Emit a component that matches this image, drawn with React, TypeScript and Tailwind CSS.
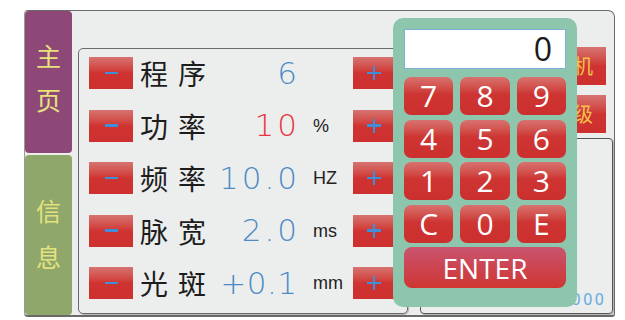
import React from "react";

const rows = [
  { label: "程序", value: "6", unit: "", red: false, track: "tracking-[3px] -mr-[3px]" },
  { label: "功率", value: "10", unit: "%", red: true, track: "tracking-[3px] -mr-[3px]" },
  { label: "频率", value: "10.0", unit: "HZ", red: false, track: "tracking-[3px] -mr-[3px]" },
  { label: "脉宽", value: "2.0", unit: "ms", red: false, track: "tracking-[3px] -mr-[3px]" },
  { label: "光斑", value: "+0.1", unit: "mm", red: false, track: "tracking-[0.5px] -mr-[0.5px]" },
];

const cjk = { fontFamily: '"Noto Sans CJK SC", "Noto Sans", sans-serif' };
const num = { fontFamily: '"DejaVu Sans", "Noto Sans", sans-serif' };
const ui = { fontFamily: '"Open Sans", "Noto Sans", sans-serif' };

function RedBtn({ children, className = "" }: { children?: React.ReactNode; className?: string }) {
  return (
    <div
      className={
        "flex items-center justify-center bg-gradient-to-b from-[#d67371] via-[#cf3331] via-50% to-[#cd302e] " +
        className
      }
    >
      {children}
    </div>
  );
}

function Key({ children, className = "" }: { children: React.ReactNode; className?: string }) {
  return (
    <div
      className={
        "flex items-center justify-center rounded-[7px] bg-gradient-to-b from-[#d77270] via-[#cd3432] via-45% to-[#cc302e] text-white text-[30px] leading-none " +
        className
      }
      style={ui}
    >
      {children}
    </div>
  );
}

export default function App() {
  return (
    <div className="relative w-[625px] h-[320px] bg-white overflow-hidden">
      <div className="pt-[10px] pl-[24px]">
        <div className="flex w-[591px] h-[307px] bg-[#eceeed] border-t border-r border-b-2 border-[#6a6a6a] rounded-tr-[7px] rounded-br-[3px] rounded-l-[4px] border-l border-l-[#9a9a9a]">
          {/* sidebar */}
          <div className="flex flex-col w-[47px] gap-[2px] shrink-0">
            <div
              className="h-[142px] bg-[#8e4878] rounded-[4px] flex flex-col items-center justify-center pb-[10px] text-[#e7e27c] text-[25px] leading-[44px]"
              style={cjk}
            >
              <span>主</span>
              <span>页</span>
            </div>
            <div
              className="flex-1 bg-[#8fa76b] rounded-[4px] flex flex-col items-center justify-center pb-[4px] text-[#e2e27e] text-[25px] leading-[46px]"
              style={cjk}
            >
              <span>信</span>
              <span>息</span>
            </div>
          </div>

          {/* inner panel */}
          <div className="ml-[6px] mt-[37px] w-[330px] h-[266px] border-[1.5px] border-[#6a6a6a] rounded-[5px] pt-[8px] pl-[10px] shadow-[1px_1px_1px_rgba(0,0,0,0.25)]">
            <div className="flex flex-col gap-[20.5px]">
              {rows.map((r) => (
                <div key={r.label} className="flex items-center h-[32px]">
                  <RedBtn className="w-[44px] h-[32px] shrink-0">
                    <span className="block w-[13px] h-[2.5px] bg-[#3d8fd9]" />
                  </RedBtn>
                  <div
                    className="ml-[7px] w-[66px] shrink-0 text-[28px] leading-none tracking-[10px] text-[#1d1d1d] whitespace-nowrap"
                    style={cjk}
                  >
                    {r.label}
                  </div>
                  <div
                    className={
                      "w-[91px] shrink-0 text-right text-[31px] leading-none font-extralight whitespace-nowrap " +
                      (r.red ? "text-[#e8343f]" : "text-[#4d8bc6]")
                    }
                    style={num}
                  >
                    <span className={r.track}>{r.value}</span>
                  </div>
                  <div
                    className="w-[56px] shrink-0 pl-[16px] text-[18px] leading-none text-[#222]"
                    style={{ fontFamily: '"Liberation Sans", Arial, sans-serif' }}
                  >
                    {r.unit}
                  </div>
                  <RedBtn className="w-[44px] h-[32px] shrink-0">
                    <span className="relative block w-[14px] h-[14px] -ml-[2px]">
                      <span className="absolute left-0 top-[5.75px] w-[14px] h-[2.5px] bg-[#3d8fd9]" />
                      <span className="absolute top-0 left-[5.75px] w-[2.5px] h-[14px] bg-[#3d8fd9]" />
                    </span>
                  </RedBtn>
                </div>
              ))}
            </div>
          </div>

          {/* right column */}
          <div className="ml-[12px] flex-1 flex flex-col pt-[36px] pb-[1px] pr-[1px]">
            <RedBtn className="self-end mr-[7px] w-[100px] h-[38px] !justify-end pr-[13px]">
              <span className="text-[20px] leading-none text-[#f2c24a]" style={cjk}>
                待机
              </span>
            </RedBtn>
            <RedBtn className="self-end mr-[7px] mt-[10px] w-[100px] h-[38px] !justify-end pr-[13px]">
              <span className="text-[20px] leading-none text-[#f2c24a]" style={cjk}>
                等级
              </span>
            </RedBtn>
            <div className="mt-[5px] flex-1 border border-[#555] rounded-[4px] flex items-end justify-between pl-[22px] pr-[8px] pb-[5px] shadow-[1px_1px_1px_rgba(0,0,0,0.25)]">
              <span className="text-[15px] leading-none text-[#69ace0] tracking-[2px]" style={num}>
                VER:01
              </span>
              <span className="text-[15px] leading-none text-[#69ace0] tracking-[2px] -mr-[2px]" style={num}>
                00.000
              </span>
            </div>
          </div>
        </div>
      </div>

      {/* keypad overlay */}
      <div className="absolute left-[393px] top-[18px] w-[184px] h-[289px] bg-[#8ec6ad] rounded-[10px] pt-[11px] px-[11px]">
        <div className="h-[40px] bg-white border border-[#7fb2d9] flex items-center justify-end pr-[13px] text-[32px] leading-none text-[#1a1a1a]" style={ui}>
          0
        </div>
        <div className="mt-[8px] grid grid-cols-3 gap-x-[7px] gap-y-[4.5px]">
          {["7", "8", "9", "4", "5", "6", "1", "2", "3", "C", "0", "E"].map((k) => (
            <Key key={k} className="h-[38px]">
              {k}
            </Key>
          ))}
        </div>
        <div
          className="mt-[4.5px] h-[41px] rounded-[8px] bg-gradient-to-b from-[#c9546f] via-[#cc4450] via-50% to-[#cf3631] flex items-center justify-center text-white text-[28px] leading-none"
          style={ui}
        >
          ENTER
        </div>
      </div>
    </div>
  );
}
